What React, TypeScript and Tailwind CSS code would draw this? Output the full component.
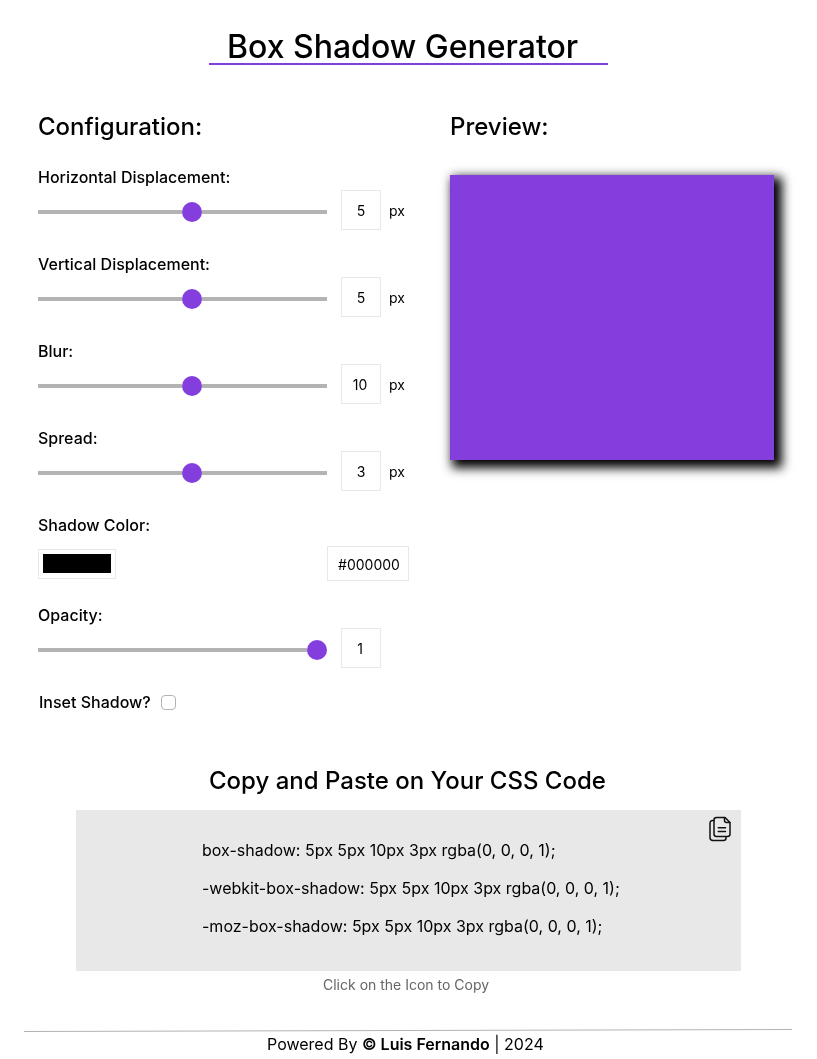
import { useState } from "react";

interface SliderFieldProps {
  label: string;
  value: number;
  unit?: string;
  atEnd?: boolean;
}

function SliderField({ label, value, unit, atEnd = false }: SliderFieldProps) {
  return (
    <div className="h-[87px]">
      <div className="h-[25px] text-base leading-6 font-medium">{label}</div>
      <div className="flex h-10 items-center">
        <div className="flex h-5 w-[289px] items-center pt-1">
          <div className={atEnd ? "h-1 w-[269px] bg-[#b3b3b3]" : "h-1 w-36 bg-[#b3b3b3]"} />
          <div className="size-5 shrink-0 rounded-full bg-[#843ede]" />
          <div className="h-1 flex-1 bg-[#b3b3b3]" />
        </div>
        <div className="ml-3.5 flex size-10 items-center justify-center border border-[#e8e8e8] pt-0.5 text-sm">
          <span className={value === 10 || atEnd ? "pr-0.5" : ""}>{value}</span>
        </div>
        {unit && <span className="ml-2 pt-0.5 text-sm">{unit}</span>}
      </div>
    </div>
  );
}

function CopyIcon() {
  return (
    <svg width="24" height="26" viewBox="0 0 24 26" fill="none" stroke="#111" strokeWidth="1.5" strokeLinejoin="round" strokeLinecap="round">
      <path d="M8.5 1.5H17L22 6.5V18A2.5 2.5 0 0 1 19.5 20.5H8.5A2.5 2.5 0 0 1 6 18V4A2.5 2.5 0 0 1 8.5 1.5Z" />
      <path d="M16.5 1.8V4.5A2 2 0 0 0 18.5 6.5H21.7" />
      <path d="M6 4.5H4.5A2.5 2.5 0 0 0 2 7V21.5A3 3 0 0 0 5 24.5H15.5A2.5 2.5 0 0 0 18 22V20.8" />
      <path d="M10.3 11.8H17.5M10.3 15.5H17.5" />
    </svg>
  );
}

export default function App() {
  const [inset, setInset] = useState(false);
  return (
    <div className="flex h-[1059px] w-[817px] flex-col overflow-hidden font-['Inter',sans-serif] text-black will-change-transform">
      <header className="ml-[209px] flex h-[65px] w-[399px] flex-col justify-end border-b-2 border-[#843ede]">
        <h1 className="h-[34px] pl-[18px] text-[32px] leading-9 font-medium whitespace-nowrap">Box Shadow Generator</h1>
      </header>

      <main className="flex h-[696px] pt-[46px] pl-[38px]">
        <section className="w-[412px]">
          <h2 className="mb-[22px] h-8 text-2xl leading-8 font-medium">Configuration:</h2>
          <SliderField label="Horizontal Displacement:" value={5} unit="px" />
          <SliderField label="Vertical Displacement:" value={5} unit="px" />
          <SliderField label="Blur:" value={10} unit="px" />
          <SliderField label="Spread:" value={3} unit="px" />
          <div className="h-[90px]">
            <div className="h-[33px] text-base leading-6 font-medium">Shadow Color:</div>
            <div className="flex h-[35px] w-[371px] items-center justify-between">
              <div className="mt-[1px] h-[30px] w-[78px] border border-[#e8e8e8] p-1">
                <div className="h-[19px] w-[68px] bg-black" />
              </div>
              <div className="flex h-[35px] w-[82px] items-center justify-center border border-[#e8e8e8] pt-0.5 pl-0.5 text-sm">
                #000000
              </div>
            </div>
          </div>
          <SliderField label="Opacity:" value={1} atEnd />
          <label className="ml-px flex h-6 items-center text-base font-medium">
            Inset Shadow?
            <input
              type="checkbox"
              checked={inset}
              onChange={(e) => setInset(e.target.checked)}
              className="ml-[10px] size-[15px] appearance-none rounded-[4px] border border-[#b3b3b3] bg-white checked:bg-[#843ede]"
            />
          </label>
        </section>
        <section>
          <h2 className="mb-8 h-8 text-2xl leading-8 font-medium">Preview:</h2>
          <div className="h-[285px] w-[324px] bg-[#843ede] shadow-[5px_5px_10px_3px_rgba(0,0,0,1)]" />
        </section>
      </main>

      <section className="flex h-[268px] flex-col">
        <h2 className="mb-[13px] ml-[209px] h-9 pt-1 text-2xl leading-8 font-medium">Copy and Paste on Your CSS Code</h2>
        <div className="ml-[76px] flex h-[161px] w-[665px] justify-between bg-[#e8e8e8]">
          <div className="flex flex-col gap-3.5 pt-7 pl-[126px] text-base leading-6">
            <p>box-shadow: 5px 5px 10px 3px rgba(0, 0, 0, 1);</p>
            <p>-webkit-box-shadow: 5px 5px 10px 3px rgba(0, 0, 0, 1);</p>
            <p>-moz-box-shadow: 5px 5px 10px 3px rgba(0, 0, 0, 1);</p>
          </div>
          <button aria-label="Copy" className="mt-1.5 mr-[9px] h-[26px] w-6">
            <CopyIcon />
          </button>
        </div>
        <p className="mt-1 pl-[323px] text-sm leading-5 text-[#666]">Click on the Icon to Copy</p>
      </section>

      <footer>
        <svg className="ml-6 block" width="768" height="3" viewBox="0 0 768 3">
          <line x1="0" y1="2.5" x2="768" y2="0.5" stroke="#b3b3b3" />
        </svg>
        <p className="pl-[267px] text-base leading-6">
          Powered By <strong className="font-semibold">© Luis Fernando</strong> | 2024
        </p>
      </footer>
    </div>
  );
}
